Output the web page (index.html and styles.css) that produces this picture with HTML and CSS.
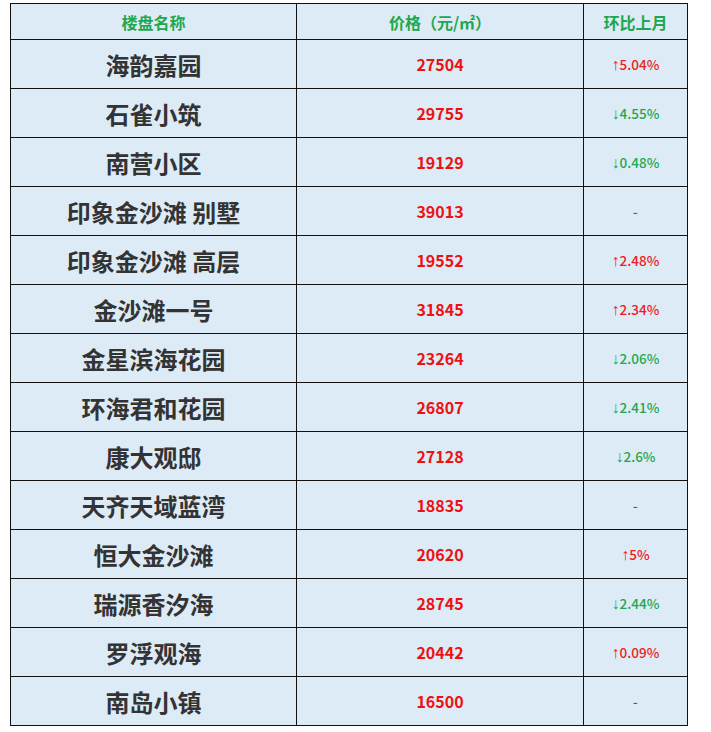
FILE: index.html
```html
<!DOCTYPE html>
<html lang="zh">
<head>
<meta charset="utf-8">
<link rel="stylesheet" href="styles.css">
</head>
<body>
<table class="grid">
  <colgroup><col class="c1"><col class="c2"><col class="c3"></colgroup>
  <thead>
    <tr><th>楼盘名称</th><th>价格（元/㎡）</th><th>环比上月</th></tr>
  </thead>
  <tbody>
    <tr><td class="name">海韵嘉园</td><td class="price">27504</td><td class="chg up"><span class="arr">↑</span>5.04%</td></tr>
    <tr><td class="name">石雀小筑</td><td class="price">29755</td><td class="chg down"><span class="arr">↓</span>4.55%</td></tr>
    <tr><td class="name">南营小区</td><td class="price">19129</td><td class="chg down"><span class="arr">↓</span>0.48%</td></tr>
    <tr><td class="name">印象金沙滩 别墅</td><td class="price">39013</td><td class="chg up">-</td></tr>
    <tr><td class="name">印象金沙滩 高层</td><td class="price">19552</td><td class="chg up"><span class="arr">↑</span>2.48%</td></tr>
    <tr><td class="name">金沙滩一号</td><td class="price">31845</td><td class="chg up"><span class="arr">↑</span>2.34%</td></tr>
    <tr><td class="name">金星滨海花园</td><td class="price">23264</td><td class="chg down"><span class="arr">↓</span>2.06%</td></tr>
    <tr><td class="name">环海君和花园</td><td class="price">26807</td><td class="chg down"><span class="arr">↓</span>2.41%</td></tr>
    <tr><td class="name">康大观邸</td><td class="price">27128</td><td class="chg down"><span class="arr">↓</span>2.6%</td></tr>
    <tr><td class="name">天齐天域蓝湾</td><td class="price">18835</td><td class="chg up">-</td></tr>
    <tr><td class="name">恒大金沙滩</td><td class="price">20620</td><td class="chg up"><span class="arr">↑</span>5%</td></tr>
    <tr><td class="name">瑞源香汐海</td><td class="price">28745</td><td class="chg down"><span class="arr">↓</span>2.44%</td></tr>
    <tr><td class="name">罗浮观海</td><td class="price">20442</td><td class="chg up"><span class="arr">↑</span>0.09%</td></tr>
    <tr><td class="name">南岛小镇</td><td class="price">16500</td><td class="chg up">-</td></tr>
  </tbody>
</table>
</body>
</html>
```
FILE: styles.css
```css
html, body {
  margin: 0;
  padding: 0;
  background: #ffffff;
}
body {
  font-family: "Noto Sans CJK SC", "Noto Sans", sans-serif;
}
.grid {
  margin: 3px 0 0 10px;
  border-collapse: collapse;
  table-layout: fixed;
  width: 677px;
  background: #ddebf7;
}
.c1 { width: 286px; }
.c2 { width: 287px; }
.c3 { width: 104px; }
.grid th, .grid td {
  border: 1px solid #111111;
  padding: 0;
  text-align: center;
  vertical-align: middle;
}
.grid th {
  height: 35px;
  color: #1ea84e;
  font-size: 16px;
  font-weight: 700;
}
.grid td {
  height: 48px;
}
.name {
  color: #333333;
  font-size: 24px;
  font-weight: 700;
  padding-top: 1px;
}
.price {
  color: #ee1111;
  font-size: 16px;
  font-weight: 700;
}
.chg {
  font-size: 13.5px;
  font-weight: 500;
}
.arr {
  font-family: "Liberation Sans", sans-serif;
  font-weight: 400;
  font-size: 16px;
  line-height: 1;
}
.up { color: #ee1c1c; }
.down { color: #1ea84e; }
```
